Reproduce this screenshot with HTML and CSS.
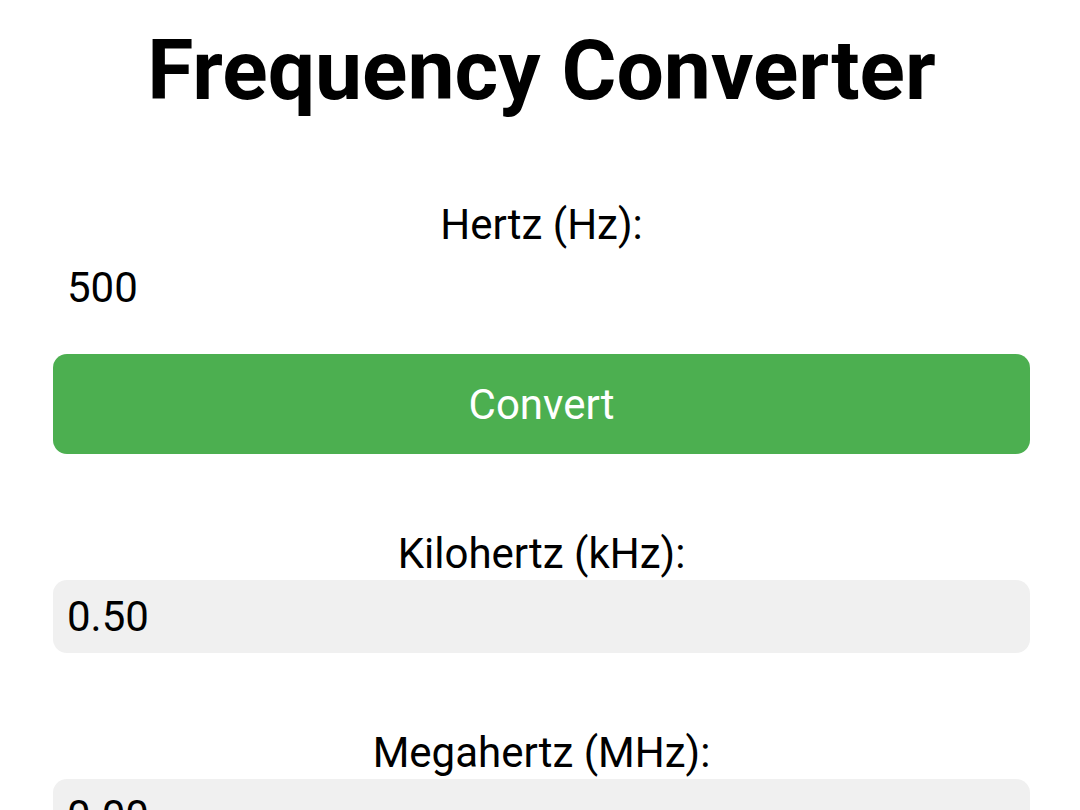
FILE: index.html
```html
<!DOCTYPE html>
<html lang="en">
<head>
<meta charset="utf-8">
<title>Frequency Converter</title>
<link rel="stylesheet" href="styles.css">
</head>
<body>
  <main class="converter">
    <h1 class="title">Frequency Converter</h1>
    <div class="field">
      <label class="field-label" for="hz">Hertz (Hz):</label>
      <input class="field-input" id="hz" type="text" value="500">
    </div>
    <button class="convert-btn" type="button">Convert</button>
    <div class="field field-result">
      <label class="field-label" for="khz">Kilohertz (kHz):</label>
      <input class="field-input field-output" id="khz" type="text" value="0.50" readonly>
    </div>
    <div class="field field-result">
      <label class="field-label" for="mhz">Megahertz (MHz):</label>
      <input class="field-input field-output" id="mhz" type="text" value="0.00" readonly>
    </div>
  </main>
</body>
</html>
```
FILE: styles.css
```css
html, body {
  margin: 0;
  padding: 0;
  background: #ffffff;
}

body {
  font-family: Roboto, "Noto Sans", Arial, sans-serif;
  color: #000000;
  overflow: hidden;
}

.converter {
  display: flex;
  flex-direction: column;
  padding: 22px 50px 0 53px;
  text-align: center;
}

.title {
  margin: 0 0 80px;
  font-size: 84px;
  font-weight: 700;
  line-height: 98px;
}

.field {
  display: flex;
  flex-direction: column;
}

.field-label {
  display: block;
  font-size: 42px;
  line-height: 50px;
  margin-bottom: 1px;
}

.field-input {
  box-sizing: border-box;
  width: 100%;
  height: 73px;
  margin: 0;
  padding: 0 14px;
  border: none;
  border-radius: 14px;
  background: transparent;
  font-family: inherit;
  font-size: 42px;
  line-height: 73px;
  color: #000000;
  outline: none;
}

.field-output {
  background: #f0f0f0;
}

.convert-btn {
  margin: 30px 0 0;
  height: 100px;
  width: 100%;
  border: none;
  border-radius: 14px;
  background: #4caf50;
  color: #ffffff;
  font-family: inherit;
  font-size: 42px;
  cursor: pointer;
}

.field-result {
  margin-top: 75px;
}
```
